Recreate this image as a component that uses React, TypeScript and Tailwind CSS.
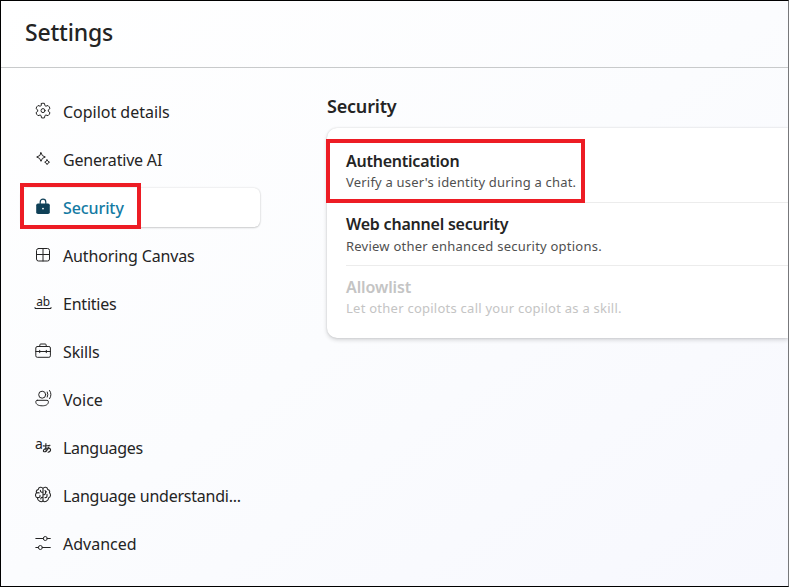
import type { ReactNode } from "react";

type NavItem = { label: string; tracking: string; icon: ReactNode; active?: boolean };

function Icon({ children }: { children: ReactNode }) {
  return (
    <svg className="mb-[3px] size-5 shrink-0 overflow-visible" viewBox="0 0 20 20" fill="none" stroke="currentColor" strokeWidth="1" strokeLinecap="round" strokeLinejoin="round">
      {children}
    </svg>
  );
}

const gear = (
  <Icon>
    <path d="M8.5 2.4Q10 2 11.5 2.4L11.9 4.6L12.9 5.2L15 4.5Q16.5 5.7 17 7.5L15.3 8.9V10.3L17 11.7Q16.5 13.5 15 14.7L12.9 14L11.9 14.6L11.5 16.8Q10 17.2 8.5 16.8L8.1 14.6L7.1 14L5 14.7Q3.5 13.5 3 11.7L4.7 10.3V8.9L3 7.5Q3.5 5.7 5 4.5L7.1 5.2L8.1 4.6Z" />
    <circle cx="10" cy="9.6" r="2" />
  </Icon>
);
const sparkles = (
  <Icon>
    <path d="M8 3.7L9.4 6.6L12.3 8L9.4 9.4L8 12.3L6.6 9.4L3.7 8L6.6 6.6Z" />
    <path d="M14.1 10.8L15 12.3L16.5 13.2L15 14.1L14.1 15.6L13.2 14.1L11.7 13.2L13.2 12.3Z" />
  </Icon>
);
const lock = (
  <Icon>
    <path d="M7.2 6.5V5A2.8 2.8 0 0 1 12.8 5V6.5" strokeWidth="1.2" />
    <rect x="3.2" y="6.5" width="13.6" height="10.5" rx="1.8" fill="currentColor" stroke="none" />
    <circle cx="10" cy="11.6" r="0.9" fill="white" stroke="none" />
  </Icon>
);
const grid = (
  <Icon>
    <rect x="3.5" y="3.5" width="13" height="12.5" rx="2" />
    <path d="M10 3.5V16M3.5 9.5H16.5" />
  </Icon>
);
const entities = (
  <Icon>
    <text x="3.2" y="13.2" fontSize="13" fontFamily="Noto Sans, sans-serif" fill="currentColor" stroke="none" textLength="14" lengthAdjust="spacingAndGlyphs">ab</text>
    <path d="M2 14.5V15.5H18V14.5" />
  </Icon>
);
const toolbox = (
  <Icon>
    <rect x="2.8" y="5.5" width="14.6" height="10.8" rx="1.5" />
    <path d="M6.8 5.5V4Q6.8 3 7.8 3H12.2Q13.2 3 13.2 4V5.5M2.8 10.5H17.4M6.7 9.3V11.7M13.3 9.3V11.7" />
  </Icon>
);
const voice = (
  <Icon>
    <circle cx="9.2" cy="5.7" r="3.5" />
    <path d="M4.3 11.3H14Q15.4 11.3 15.4 12.7C15.4 15.6 12.8 16.8 9.2 16.8S2.8 15.6 2.8 12.7Q2.8 11.3 4.3 11.3ZM14.3 3Q15.5 5.5 14.3 8.1M16.6 1.5Q19.4 5.5 16.6 9.7" />
  </Icon>
);
const languages = (
  <Icon>
    <text x="2" y="12" fontSize="14" fontFamily="Noto Sans, sans-serif" fill="currentColor" stroke="none">a</text>
    <path d="M10.2 8.9Q13.5 9.3 17 8.3M12.9 6.6Q12.3 11.3 13.4 14.2M15.9 9.8C15 13 12.2 15.5 10.7 14.5C9.4 13.2 12.3 10.9 15.2 11C18.4 11.2 18.4 14.7 15 15.2" strokeWidth="1.1" />
  </Icon>
);
const brain = (
  <Icon>
    <path d="M10 3.5C8.8 1.5 5.6 2 5.3 4.5C3.3 4.9 2.9 6.9 3.6 7.9C1.9 9 2.2 12 4.3 12.7C4.7 16.2 8.5 17.9 10 15.6C11.5 17.9 15.3 16.2 15.7 12.7C17.8 12 18.1 9 16.4 7.9C17.1 6.9 16.7 4.9 14.7 4.5C14.4 2 11.2 1.5 10 3.5ZM10 3.5V15.6M4 8Q5 7.2 6.2 8M7.4 5.2Q7.2 7.5 10 7.3M4.5 12.6Q7.5 12.8 7 10.3M10 12.4Q8 12 7.8 13.9M10 9.8Q13 9.8 12.5 6.8M12 5.6L13.4 6.8M14 9.4V11Q14 12.8 12 12.6" strokeWidth="1.1" />
  </Icon>
);
const sliders = (
  <Icon>
    <path d="M2.8 5.5H10.3M14.3 5.5H17.3M2.8 14.5H5.4M9.4 14.5H17.3" />
    <circle cx="12.3" cy="5.5" r="2" />
    <circle cx="7.4" cy="14.5" r="2" />
  </Icon>
);

const navItems: NavItem[] = [
  { label: "Copilot details", tracking: "tracking-[-0.02px]", icon: gear },
  { label: "Generative AI", tracking: "tracking-[-0.2px]", icon: sparkles },
  { label: "Security", tracking: "tracking-[-0.1px]", icon: lock, active: true },
  { label: "Authoring Canvas", tracking: "tracking-[-0.14px]", icon: grid },
  { label: "Entities", tracking: "tracking-[-0.22px]", icon: entities },
  { label: "Skills", tracking: "tracking-[-0.12px]", icon: toolbox },
  { label: "Voice", tracking: "tracking-[0.02px]", icon: voice },
  { label: "Languages", tracking: "tracking-[-0.3px]", icon: languages },
  { label: "Language understandi...", tracking: "tracking-[-0.24px]", icon: brain },
  { label: "Advanced", tracking: "tracking-[0px]", icon: sliders },
];

export default function App() {
  return (
    <div className="relative flex h-[587px] w-[789px] flex-col overflow-hidden border border-black border-r-[#77787b] bg-linear-to-br from-white via-[#fbfcfe] to-[#f7f8fe] font-['Segoe_UI','Noto_Sans',sans-serif] text-[#242424]">
      <header className="flex h-[67px] shrink-0 items-center border-b border-[#c8cacb] pb-1 pl-6">
        <h1 className="text-[23px] leading-7 font-medium tracking-[-0.18px]">Settings</h1>
      </header>
      <div className="flex min-h-0 flex-1">
        <nav className="flex w-[259px] shrink-0 flex-col gap-[9px] pt-6 pl-5">
          {navItems.map((item) => (
            <a
              key={item.label}
              className={`flex h-[39px] shrink-0 items-center gap-2.5 rounded-md pt-px pl-3 whitespace-nowrap ${item.active ? "bg-white text-[#0f4057] shadow-[0_0_2px_rgba(0,0,0,0.16),0_1px_2px_rgba(0,0,0,0.16)]" : ""}`}
            >
              {item.icon}
              <span className={`text-base leading-6 ${item.tracking} ${item.active ? "font-medium text-[#147aa3]" : "font-normal"}`}>{item.label}</span>
            </a>
          ))}
        </nav>
        <main className="ml-[67px] min-w-0 flex-1 pt-[26px]">
          <h2 className="text-[18px] leading-6 font-semibold tracking-[-0.2px]">Security</h2>
          <section className="mt-[10px] h-[210px] rounded-l-[10px] bg-white pl-[19px] shadow-[0_0_2px_rgba(0,0,0,0.14),0_2px_4px_rgba(0,0,0,0.16)]">
            <div className="h-[75px] border-b border-[#ececec] pt-[22px]">
              <h3 className="text-base leading-[22px] font-semibold tracking-[-0.24px]">Authentication</h3>
              <p className="text-[13px] leading-5 tracking-[0.2px] text-[#505050]">Verify a user's identity during a chat.</p>
            </div>
            <div className="h-[63px] border-b border-[#ececec] pt-[10px]">
              <h3 className="text-base leading-[22px] font-semibold tracking-[-0.22px]">Web channel security</h3>
              <p className="mt-px text-[13px] leading-5 tracking-[0.23px] text-[#505050]">Review other enhanced security options.</p>
            </div>
            <div className="pt-[10px] text-[#c4c4c4]">
              <h3 className="text-base leading-[22px] font-semibold tracking-[-0.1px]">Allowlist</h3>
              <p className="text-[13px] leading-5 tracking-[0.25px]">Let other copilots call your copilot as a skill.</p>
            </div>
          </section>
        </main>
      </div>
      <div className="absolute top-[182px] left-[19px] h-[46px] w-[121px] border-4 border-[#ed1c24]" />
      <div className="absolute top-[138px] left-[325px] h-16 w-[259px] border-4 border-[#ed1c24]" />
    </div>
  );
}
